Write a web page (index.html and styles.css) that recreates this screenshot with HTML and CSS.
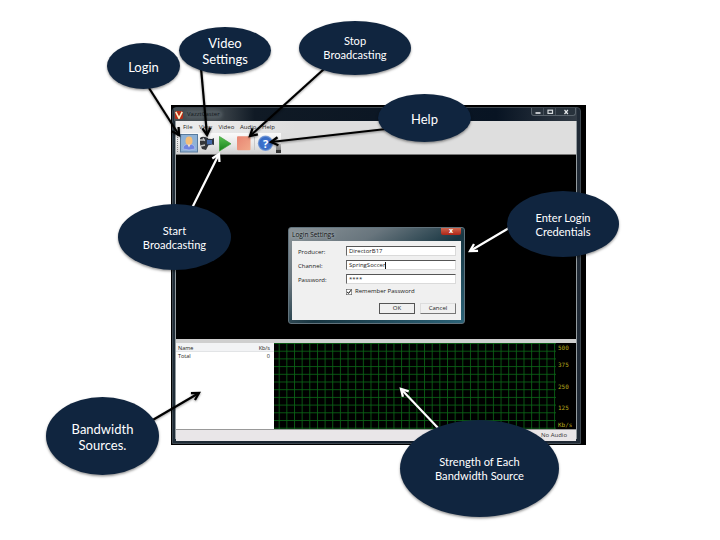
FILE: index.html
```
<!DOCTYPE html>
<html lang="en">
<head>
<meta charset="utf-8">
<title>Broadcaster guide</title>
<link rel="stylesheet" href="styles.css">
</head>
<body>
<main class="slide">
  <section class="shot">
    <div class="window">
      <header class="titlebar">
        <svg class="logo" viewBox="0 0 10 10"><rect width="10" height="10" rx="2" fill="#b62d17"/><path d="M1 1L5 9L9 1" fill="none" stroke="#fff0c8" stroke-width="2"/></svg>
        <span class="app-name">VazztCaster</span>
        <div class="controls">
          <span><svg viewBox="0 0 12 8"><path d="M3.5 5h5" stroke="#e4e7ea" stroke-width="1.6"/></svg></span>
          <span><svg viewBox="0 0 12 8"><rect x="4" y="2.2" width="4.5" height="3.2" fill="none" stroke="#d5d9dc" stroke-width="1.2"/></svg></span>
          <span class="wide"><svg viewBox="0 0 12 8"><path d="M4.5 2l3.4 4M7.9 2L4.5 6" stroke="#e4e7ea" stroke-width="1.2"/></svg></span>
        </div>
      </header>
      <div class="client">
        <nav class="menu"><span>File</span><span>View</span><span>Video</span><span>Audio</span><span>Help</span></nav>
        <div class="toolbar">
          <i class="grip"></i>
          <svg class="tools" viewBox="0 0 98 20">
            <defs>
              <linearGradient id="g1" x2="0" y2="1"><stop stop-color="#58c252"/><stop offset="1" stop-color="#16801a"/></linearGradient>
              <linearGradient id="g2" x2="1" y2="1"><stop stop-color="#e88573"/><stop offset="1" stop-color="#f1a98a"/></linearGradient>
              <radialGradient id="g3"><stop stop-color="#3f78d8"/><stop offset=".75" stop-color="#386bc4"/><stop offset="1" stop-color="#89a9dc"/></radialGradient>
            </defs>
            <rect x=".5" y=".5" width="17" height="17.500" fill="#8fb2d6" stroke="#597b9d"/>
            <path d="M3 15q0-5 6-5t6 5q-6 2-12 0z" fill="#6f84e0" stroke="#b9c6ee" stroke-width=".7"/>
            <ellipse cx="9" cy="6.700" rx="3.500" ry="4.300" fill="#f5be78"/>
            <path d="M7.500 10.500h3l-1.500 3z" fill="#f4e3ce"/>
            <path d="M20 4q2-2 5-1l3 1v8l-2 4-4-1-2-5z" fill="#34363a"/>
            <path d="M20 6h4M21 12l4-1M23 4l2 3" stroke="#c0c2c4" stroke-width="1.300"/>
            <path d="M25 4.500l7 .5 2-1v7l-2-.5-6 1.500z" fill="#2e3742"/><rect x="27" y="6" width="5" height="4.300" fill="#4469aa"/>
            <path d="M39.500 2.500v14.500L51 9.800z" fill="url(#g1)" stroke="#3d9c3a" stroke-width=".7"/>
            <rect x="57" y="2.300" width="13.500" height="14" rx="1" fill="url(#g2)"/>
            <path d="M74.500 3v13" stroke="#c8c8c8"/>
            <circle cx="85.500" cy="9.300" r="7.700" fill="url(#g3)"/>
            <text class="question" x="85.500" y="13.500" text-anchor="middle">?</text>
          </svg>
          <i class="overflow"></i>
        </div>
        <div class="video"></div>
        <div class="lower">
          <div class="list">
            <div class="row head"><span>Name</span><span>Kb/s</span></div>
            <div class="row"><span>Total</span><span>0</span></div>
          </div>
          <div class="graph">
            <svg class="grid" viewBox="0 0 282 86">
              <defs><pattern id="p" width="7.650" height="7.700" x="4.700" y="7.700" patternUnits="userSpaceOnUse"><path d="M.5 0V7.700M0 .5H7.650" stroke="#0a6415" stroke-width=".85" fill="none"/></pattern></defs>
              <rect width="282" height="86" fill="url(#p)"/>
            </svg>
            <div class="scale"><span>500</span><span>375</span><span>250</span><span>125</span><span>Kb/s</span></div>
          </div>
        </div>
        <footer class="status">No Audio</footer>
      </div>
    </div>
  </section>

  <section class="dialog">
    <header class="dialog-title"><span>Login Settings</span><b class="close">x</b></header>
    <div class="form">
      <label>Producer:</label><div class="field">DirectorB17</div>
      <label>Channel:</label><div class="field">SpringSoccer<i class="caret"></i></div>
      <label>Password:</label><div class="field">****</div>
      <div class="remember"><svg viewBox="0 0 6 6"><rect x=".3" y=".3" width="5.400" height="5.400" fill="#fff" stroke="#555" stroke-width=".6"/><path d="M1.200 2.800l1.300 1.600L5 1.200" fill="none" stroke="#000"/></svg>Remember Password</div>
      <div class="buttons"><span class="button primary">OK</span><span class="button">Cancel</span></div>
    </div>
  </section>

  <svg class="arrows" viewBox="0 0 720 540">
    <defs>
      <marker id="dark" markerUnits="userSpaceOnUse" markerWidth="14" markerHeight="14" refX="10" refY="6" orient="auto"><path d="M3 2L10 6L3 10" fill="none" stroke="#000" stroke-width="2.300"/></marker>
      <marker id="light" markerUnits="userSpaceOnUse" markerWidth="14" markerHeight="14" refX="10" refY="6" orient="auto"><path d="M3 2L10 6L3 10" fill="none" stroke="#fff" stroke-width="2.300"/></marker>
    </defs>
    <g class="dark">
      <path d="M149 88L179 135"/><path d="M201 68L207 135"/><path d="M324 69L250 136"/><path d="M386 129L271 142"/><path d="M151 421L199 393"/>
    </g>
    <g class="light">
      <path d="M192 208L219 154"/><path d="M509 228L470 251"/><path d="M439 429L401 389"/>
    </g>
  </svg>

  <div class="callout login"><p>Login</p></div>
  <div class="callout settings"><p>Video<br>Settings</p></div>
  <div class="callout stop"><p>Stop<br>Broadcasting</p></div>
  <div class="callout help"><p>Help</p></div>
  <div class="callout credentials"><p>Enter Login<br>Credentials</p></div>
  <div class="callout start"><p>Start<br>Broadcasting</p></div>
  <div class="callout sources"><p>Bandwidth<br>Sources.</p></div>
  <div class="callout strength"><p>Strength of Each<br>Bandwidth Source</p></div>
</main>
</body>
</html>
```
FILE: styles.css
```
* { box-sizing: border-box; }
body { margin: 0; background: #fff; }
.slide { position: relative; width: 720px; height: 540px; overflow: hidden; font-family: "Open Sans", sans-serif; }

/* Application window */
.shot { position: absolute; left: 171px; top: 105px; width: 415px; height: 340px; padding: 2px 5px 1px 1px; background: #000; }
.window { display: flex; flex-direction: column; height: 337px; padding: 0 3px 4px 2px; border: 1px solid #3f4850; border-radius: 4px 4px 0 0; background: linear-gradient(90deg, #202d38, #101b28 50%, #202a36); }
.titlebar { display: flex; height: 13px; flex: none; align-items: center; margin-left: -1px; background: linear-gradient(90deg, #474f54 0, #434b50 10%, #101a25 20%, #081423 80%, #323b45); }
.logo { width: 8px; height: 8px; margin-left: 1px; }
.app-name { margin-left: 3px; padding: 0 2px 0 1px; border-radius: 4px; background: #59636980; box-shadow: 0 0 3px 1px #59636980; font-size: 6px; line-height: 7px; color: #14191d; }
.controls { display: flex; align-self: flex-start; height: 8px; margin-left: auto; margin-right: 1px; border: 1px solid #59636c; border-top: 0; border-radius: 0 0 3px 3px; background: #28323c; }
.controls span { width: 12px; border-right: 1px solid #46505b; }
.controls .wide { width: 19px; border: 0; }
.controls svg { display: block; width: 12px; height: 8px; margin: 0 auto; }
.client { display: flex; flex: 1; flex-direction: column; min-height: 0; background: #dedede; border-left: 1px solid #929a9e; border-right: 1px solid #929a9e; }
.menu { display: flex; height: 12px; flex: none; padding-left: 7px; font: 6px/13px "Open Sans", sans-serif; color: #222; background: linear-gradient(90deg, #eee, #dedede 30%); }
.menu span:nth-child(1) { width: 16px; }
.menu span:nth-child(2) { width: 19.500px; }
.menu span:nth-child(3) { width: 21.500px; }
.menu span:nth-child(4) { width: 22px; }
.toolbar { display: flex; width: 105px; height: 21px; flex: none; padding-left: 1px; background: linear-gradient(#fafafa, #e5e5e5 60%, #cfcfcf); }
.grip { width: 2px; height: 17px; margin: 2px 1px 0 0; border-left: 1px dotted #888; }
.tools { width: 98px; height: 20px; flex: none; margin-top: 1px; }
.question { font: bold 11px "Open Sans", sans-serif; fill: #fff; }
.overflow { width: 5px; height: 9px; margin: 11px 0 0 -2px; flex: none; background: linear-gradient(#bbb, #777); border-bottom: 3px solid #333; }
.video { height: 185px; flex: none; border-top: 1px solid #777; background: #000; }
.lower { display: flex; height: 90px; flex: none; padding-top: 4px; background: #cfcfcf; }
.list { width: 98px; flex: none; background: #fff; font-size: 5.500px; color: #222; }
.row { display: flex; height: 8px; justify-content: space-between; padding: 0 4px 0 2px; line-height: 8px; }
.head { height: 9px; border-bottom: 1px solid #e2e4e6; background: #f2f3f5; line-height: 10px; }
.graph { display: flex; flex: 1; background: #000; }
.grid { width: 282px; height: 86px; flex: none; }
.scale { display: grid; grid-template-rows: 17px 22px 21px 17px 9px; padding-left: 2px; font: 6px/9px "DejaVu Sans Mono", monospace; color: #b7aa1c; }
.status { display: flex; flex: 1; justify-content: flex-end; padding-right: 9px; border-top: 1px solid #999; background: #e9e6e8; font-size: 6px; line-height: 11px; color: #333; }

/* Login dialog */
.dialog { position: absolute; left: 288px; top: 227px; width: 177px; height: 97px; padding: 1px 3px 4px; border: 1px solid #61727c; border-radius: 3px; background: linear-gradient(150deg, #8b9499 0, #68757d 28%, #183642 55%, #2c6378); }
.dialog-title { display: flex; height: 12px; justify-content: space-between; font-size: 6.500px; line-height: 11px; color: #111; text-shadow: 0 0 3px #c8d3d9; }
.close { height: 7px; width: 20px; margin-top: -1px; border-radius: 0 0 2px 2px; background: linear-gradient(#d0674f, #ab2517); font-size: 7px; line-height: 5px; text-align: center; color: #fff; text-shadow: none; }
.form { display: grid; height: 79px; grid-template-columns: 48px 110px; grid-template-rows: 10px 10px 10px 7px 13px; row-gap: 4px; padding: 5px 0 0 6px; background: #f0f0f0; font-size: 6px; line-height: 10px; color: #222; }
.form label { padding-top: 1px; }
.field { padding-left: 2px; border: 1px solid #dadada; border-top-color: #555; border-left-color: #666; background: #fff; line-height: 8px; }
.caret { display: inline-block; width: 1px; height: 7px; vertical-align: middle; background: #111; }
.remember { display: flex; grid-column: 2; align-items: center; gap: 3px; white-space: nowrap; line-height: 7px; }
.remember svg { width: 6px; height: 6px; }
.buttons { display: flex; grid-column: 1 / -1; justify-content: flex-end; gap: 5px; margin-top: 4px; }
.button { width: 36px; height: 11px; border: 1px solid #ddd; border-right-color: #777; border-bottom-color: #777; text-align: center; line-height: 9px; }
.primary { border-color: #555; }

/* Annotations */
.arrows { position: absolute; inset: 0; width: 720px; height: 540px; fill: none; stroke-width: 2.200; filter: drop-shadow(0 1px 1px #0006); }
.dark { stroke: #000; }
.dark path { marker-end: url(#dark); }
.light { stroke: #fff; }
.light path { marker-end: url(#light); }
.callout { position: absolute; display: flex; align-items: center; justify-content: center; border-radius: 50%; background: #10253f; box-shadow: 0 1.500px 2.500px #0006; color: #fff; font: 11.100px/14px Lato, sans-serif; text-align: center; white-space: nowrap; }
.callout p { margin: 0; }
.login { left: 107px; top: 43px; width: 73px; height: 46px; font-size: 13px; padding-top: 2px; }
.settings { left: 179px; top: 27px; width: 92px; height: 47px; font-size: 13px; line-height: 16px; }
.stop { left: 299px; top: 21px; width: 112px; height: 54px; }
.help { left: 378px; top: 94px; width: 93px; height: 48px; font-size: 13px; padding-top: 2px; }
.credentials { left: 507px; top: 191px; width: 112px; height: 66px; padding-top: 2px; }
.start { left: 118px; top: 204px; width: 113px; height: 66px; padding-top: 2px; }
.sources { left: 46px; top: 397px; width: 113px; height: 78px; font-size: 13px; line-height: 16px; padding-top: 2px; }
.strength { left: 400px; top: 420px; width: 159px; height: 97px; }
```
